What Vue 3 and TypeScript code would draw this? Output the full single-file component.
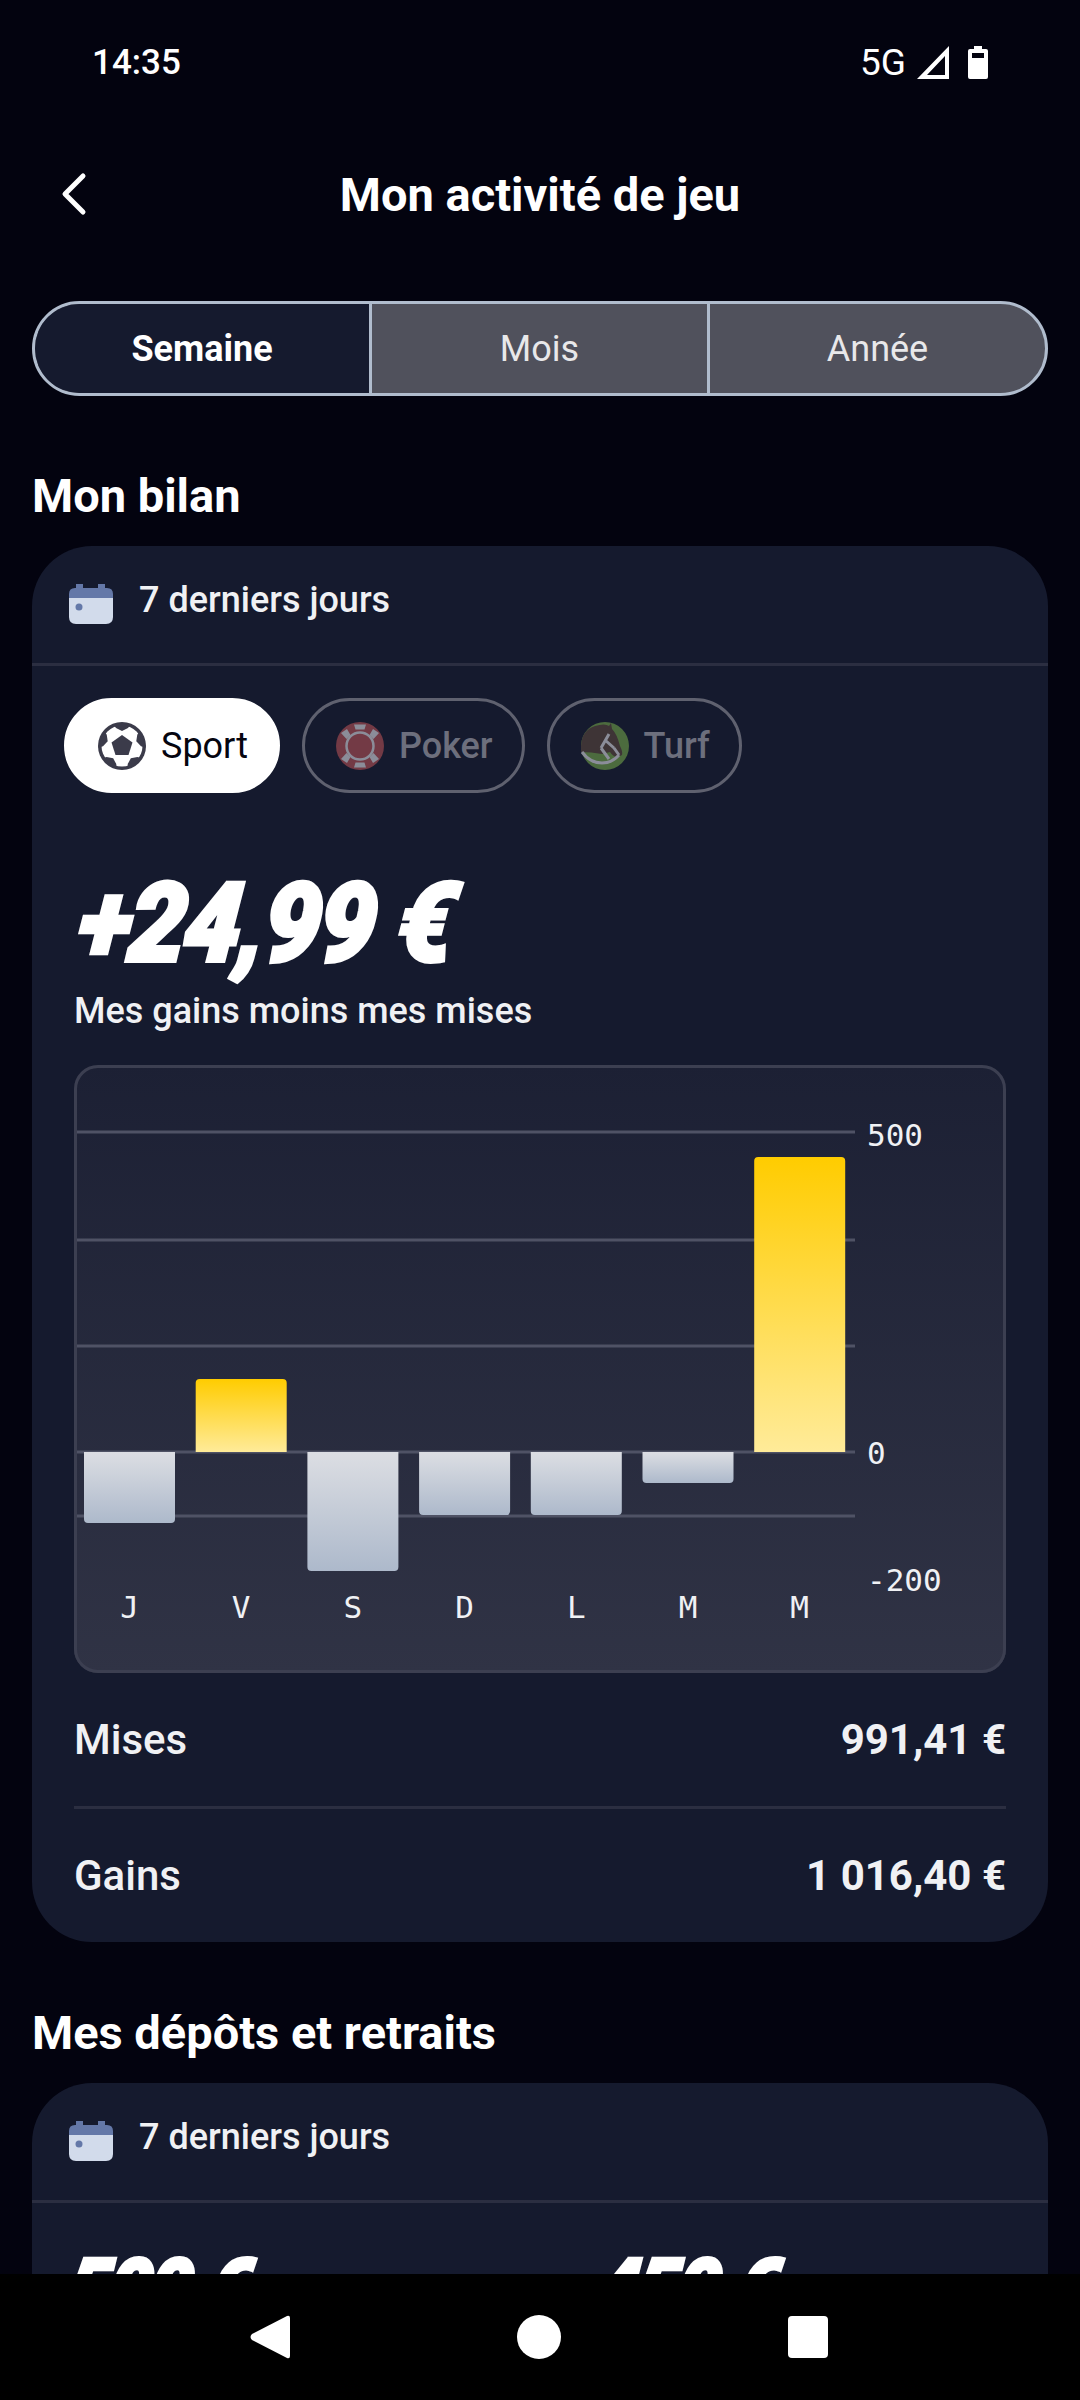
<template>
  <div class="screen">
    <div class="status-bar">
      <span class="clock">14:35</span>
      <div class="status-right">
        <span class="network">5G</span>
        <svg class="signal" viewBox="0 0 32 33" width="32" height="33">
          <path d="M32 0v33H0z M28 10L10 29h18z" fill="#fff" fill-rule="evenodd" />
        </svg>
        <svg class="battery" viewBox="0 0 20 33" width="20" height="33">
          <path d="M6 0h8v3h4q2 0 2 2v26q0 2-2 2H2q-2 0-2-2V5q0-2 2-2h4z M4 7v5h12V7z" fill="#fff" fill-rule="evenodd" />
        </svg>
      </div>
    </div>

    <div class="content">
      <header class="top-bar">
        <svg class="back" viewBox="0 0 30 44" width="30" height="44">
          <path d="M24 4L6 22l18 18" fill="none" stroke="#fff" stroke-width="5" stroke-linecap="round" stroke-linejoin="round" />
        </svg>
        <h1 class="title">Mon activité de jeu</h1>
      </header>

      <div class="segments">
        <div
          v-for="(tab, i) in periods"
          :key="tab"
          class="segment"
          :class="{ active: i === 0 }"
        >{{ tab }}</div>
      </div>

      <h2 class="section-title first">Mon bilan</h2>
      <section class="card">
        <div class="card-head">
          <svg class="calendar" viewBox="0 0 44 40" width="44" height="40">
            <path d="M7 0h7v4h15V0h7v4h2q6 0 6 6v5H0v-5q0-6 6-6h1z" fill="#6478a8" />
            <path d="M0 14h44v19q0 7-7 7H7q-7 0-7-7z" fill="#d2dbeb" />
            <circle cx="10" cy="23" r="3.500" fill="#6478a8" />
          </svg>
          <span>7 derniers jours</span>
        </div>

        <div class="card-body">
          <div class="chips">
            <div class="chip on">
              <svg class="chip-icon" viewBox="0 0 48 48" width="48" height="48">
                <circle cx="24" cy="24" r="24" fill="#3b3b4a" />
                <circle cx="24" cy="24" r="20.500" fill="#fff" />
                <path
                  v-for="i in 5"
                  :key="i"
                  d="M15 2h18l-3 4-6 3-6-3z"
                  fill="#3b3b4a"
                  :transform="`rotate(${i * 72} 24 24)`"
                />
                <path d="M24 13l10.500 7.600-4 12.400h-13l-4-12.400z" fill="#3b3b4a" />
              </svg>
              <span>Sport</span>
            </div>
            <div class="chip">
              <svg class="chip-icon" viewBox="0 0 48 48" width="48" height="48">
                <circle cx="24" cy="24" r="24" fill="#733a45" />
                <circle cx="24" cy="24" r="13.500" fill="none" stroke="#8b8d99" stroke-width="2.500" />
                <path d="M18 2.500h12l-1.500 5h-9z M18 45.500h12l-1.500-5h-9z M5 11l6-4 3.500 6-4 4z M43 11l-6-4-3.500 6 4 4z M5 37l6 4 3.500-6-4-4z M43 37l-6 4-3.500-6 4-4z" fill="#8b8d99" />
              </svg>
              <span>Poker</span>
            </div>
            <div class="chip">
              <svg class="chip-icon" viewBox="0 0 48 48" width="48" height="48">
                <circle cx="24" cy="24" r="24" fill="#4c6b3e" />
                <path d="M0 24Q1 8 14 4 Q24 1 28 4l2-3 1 6q5 5 8 17 3 6 2 9l-4 2q-5 0-8-5l-8 2Q10 30 0 30z" fill="#3e3436" />
                <path d="M1 30q8 11 20 11 10 0 17-8 M28 12l-8 14 M24 18l9 8 M20 26l8 11 M33 26l5 7" fill="none" stroke="#8b8d99" stroke-width="3" />
              </svg>
              <span>Turf</span>
            </div>
          </div>

          <div class="balance">+24,99 €</div>
          <p class="balance-label">Mes gains moins mes mises</p>

          <div class="chart">
            <svg viewBox="0 0 930 608" width="930" height="608">
              <defs>
                <linearGradient id="barUp" x1="0" y1="0" x2="0" y2="1">
                  <stop offset="0" stop-color="#ffcc00" />
                  <stop offset="1" stop-color="#ffeb99" />
                </linearGradient>
                <linearGradient id="barDown" x1="0" y1="0" x2="0" y2="1">
                  <stop offset="0" stop-color="#dcdee3" />
                  <stop offset="1" stop-color="#adb9cb" />
                </linearGradient>
              </defs>
              <line
                v-for="y in gridLines"
                :key="y"
                x1="0"
                x2="781"
                :y1="y"
                :y2="y"
                stroke="#4f5265"
                stroke-width="3"
              />
              <path
                v-for="bar in bars"
                :key="bar.x"
                :d="bar.d"
                :fill="bar.up ? 'url(#barUp)' : 'url(#barDown)'"
              />
              <text
                v-for="bar in bars"
                :key="'l' + bar.x"
                class="axis"
                :x="bar.x + 45.500"
                y="553"
                text-anchor="middle"
              >{{ bar.label }}</text>
              <text class="axis" x="793" y="81">500</text>
              <text class="axis" x="793" y="399">0</text>
              <text class="axis" x="793" y="526">-200</text>
            </svg>
          </div>

          <div class="row">
            <span>Mises</span>
            <strong>991,41 €</strong>
          </div>
          <div class="row last">
            <span>Gains</span>
            <strong>1 016,40 €</strong>
          </div>
        </div>
      </section>

      <h2 class="section-title">Mes dépôts et retraits</h2>
      <section class="card">
        <div class="card-head">
          <svg class="calendar" viewBox="0 0 44 40" width="44" height="40">
            <path d="M7 0h7v4h15V0h7v4h2q6 0 6 6v5H0v-5q0-6 6-6h1z" fill="#6478a8" />
            <path d="M0 14h44v19q0 7-7 7H7q-7 0-7-7z" fill="#d2dbeb" />
            <circle cx="10" cy="23" r="3.500" fill="#6478a8" />
          </svg>
          <span>7 derniers jours</span>
        </div>
        <div class="totals">
          <div class="balance small">500 €</div>
          <div class="balance small">450 €</div>
        </div>
      </section>
    </div>

    <nav class="nav-bar">
      <svg viewBox="0 0 40 44" width="40" height="44">
        <path d="M40 3v38q0 3-3 2L2 25q-3-3 0-6L37 1q3-1 3 2z" fill="#fff" />
      </svg>
      <svg viewBox="0 0 44 44" width="44" height="44">
        <circle cx="22" cy="22" r="22" fill="#fff" />
      </svg>
      <svg viewBox="0 0 40 42" width="40" height="42">
        <rect width="40" height="42" rx="4" fill="#fff" />
      </svg>
    </nav>
  </div>
</template>

<script setup lang="ts">
const periods = ['Semaine', 'Mois', 'Année']

// chart box is 930 wide, coordinates below are relative to its top left
const zeroY = 387
const gridLines = [67, 175, 281, 387, 451]

const dayBars = [
  { label: 'J', end: 71 },
  { label: 'V', end: -73 },
  { label: 'S', end: 119 },
  { label: 'D', end: 63 },
  { label: 'L', end: 63 },
  { label: 'M', end: 31 },
  { label: 'M', end: -295 }
]

const bars = dayBars.map((b, i) => {
  const x = 10 + i * 111.700
  const up = b.end < 0
  const r = up ? 4 : -4
  const tip = zeroY + b.end
  const sweep = up ? 1 : 0
  const d =
    `M${x} ${zeroY}V${tip + r}` +
    `A4 4 0 0 ${sweep} ${x + 4} ${tip}` +
    `H${x + 87}` +
    `A4 4 0 0 ${sweep} ${x + 91} ${tip + r}` +
    `V${zeroY}Z`
  return { label: b.label, x, up, d }
})
</script>

<style scoped>
.screen {
  width: 1080px;
  height: 2400px;
  display: flex;
  flex-direction: column;
  overflow: hidden;
  background: #03030f;
  color: #fff;
  font-family: Roboto, sans-serif;
}

.status-bar {
  flex: none;
  height: 122px;
  box-sizing: border-box;
  display: flex;
  align-items: center;
  justify-content: space-between;
  padding: 2px 92px 0;
  font-size: 35px;
  font-weight: 500;
}

.status-right {
  display: flex;
  align-items: center;
}

.network {
  font-size: 37px;
  font-weight: 400;
}

.signal {
  margin-left: 11px;
}

.battery {
  margin-left: 19px;
}

.content {
  flex: 1;
  min-height: 0;
  overflow: hidden;
  padding: 0 32px;
}

.top-bar {
  position: relative;
  height: 144px;
  display: flex;
  align-items: center;
  justify-content: center;
}

.back {
  position: absolute;
  left: 27px;
  top: 50px;
}

.title {
  margin: 0;
  font-size: 47px;
  font-weight: 700;
}

.segments {
  margin-top: 35px;
  height: 95px;
  display: flex;
  box-sizing: border-box;
  border: 3px solid #b0bccd;
  border-radius: 48px;
  overflow: hidden;
  background: #50515c;
}

.segment {
  flex: 1;
  display: flex;
  align-items: center;
  justify-content: center;
  font-size: 36px;
  color: #e8e8ea;
}

.segment + .segment {
  border-left: 3px solid #b0bccd;
}

.segment.active {
  flex: none;
  width: 334px;
  background: #151a2e;
  color: #fff;
  font-weight: 700;
}

.section-title {
  margin: 0;
  padding-top: 64px;
  height: 141px;
  box-sizing: border-box;
  font-size: 47px;
  font-weight: 700;
  line-height: 54px;
}

.section-title.first {
  height: 150px;
  padding-top: 73px;
}

.card {
  background: #151a2e;
  border-radius: 60px;
  overflow: hidden;
}

.card-head {
  height: 117px;
  box-sizing: content-box;
  display: flex;
  align-items: center;
  gap: 26px;
  padding: 0 37px 0 37px;
  border-bottom: 3px solid #2b2e41;
  font-size: 36px;
  font-weight: 500;
  color: #f0f1f4;
}

.card-head span {
  margin-top: -10px;
}

.calendar {
  margin-top: -2px;
}

.card-body {
  padding: 32px 42px 0;
}

.chips {
  display: flex;
  gap: 22px;
  margin-left: -10px;
}

.chip {
  height: 95px;
  box-sizing: border-box;
  display: flex;
  align-items: center;
  gap: 15px;
  padding: 0 29px 0 31px;
  border: 3px solid #5f616f;
  border-radius: 48px;
  font-size: 36px;
  font-weight: 500;
  color: #6d6f7d;
}

.chip.on {
  background: #fff;
  border-color: #fff;
  color: #05050f;
  font-weight: 400;
}

.balance {
  display: inline-block;
  margin-top: 73px;
  font-size: 110px;
  line-height: 116px;
  font-weight: 900;
  font-style: italic;
  letter-spacing: -2px;
  -webkit-text-stroke: 4px #fff;
  transform: scaleX(0.92) skewX(-6deg);
  transform-origin: left bottom;
  vertical-align: top;
}

.balance-label {
  margin: 0;
  padding-top: 4px;
  font-size: 36px;
  font-weight: 500;
  line-height: 50px;
  color: #f0f1f4;
}

.chart {
  margin-top: 29px;
  height: 608px;
  box-sizing: border-box;
  border-radius: 24px;
  outline: 3px solid #3c3f51;
  outline-offset: -3px;
  background: linear-gradient(#1c2034, #303345);
  overflow: hidden;
}

.chart svg {
  display: block;
}

.axis {
  font-family: "DejaVu Sans Mono", monospace;
  font-size: 31px;
  fill: #f0f1f4;
}

.row {
  height: 133px;
  display: flex;
  align-items: center;
  justify-content: space-between;
  border-bottom: 3px solid #2b2e41;
  font-size: 42px;
  font-weight: 500;
  color: #f0f1f4;
}

.row strong {
  font-weight: 700;
}

.row.last {
  border-bottom: none;
}

.totals {
  display: flex;
  padding: 0 33px;
}

.balance.small {
  flex: none;
  width: 528px;
  margin-top: 38px;
  font-size: 82px;
  line-height: 96px;
}

.nav-bar {
  flex: none;
  height: 126px;
  background: #000;
  display: flex;
  align-items: center;
  justify-content: center;
  gap: 227px;
  padding-right: 3px;
}
</style>

<style>
html, body {
  background: #03030f;
}
</style>
